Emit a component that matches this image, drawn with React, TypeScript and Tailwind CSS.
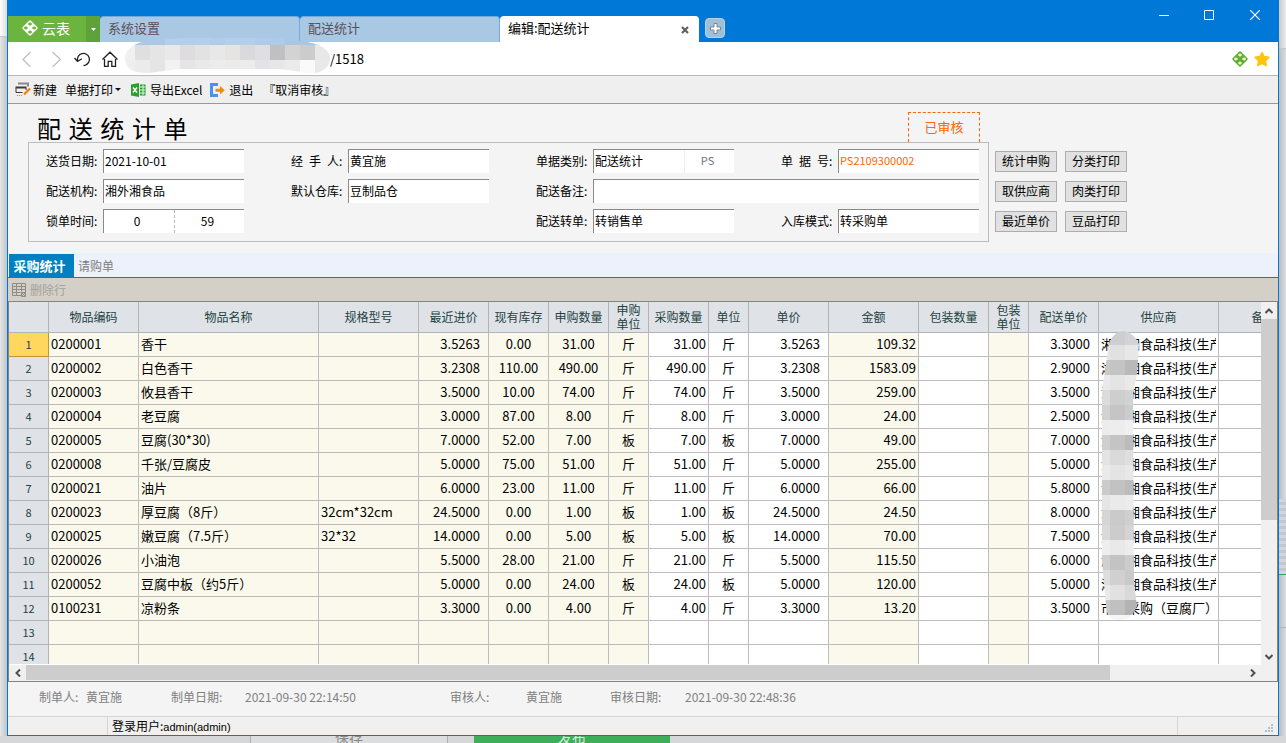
import { ReactNode } from "react"
import { clsx } from "clsx"

type Align = 'left' | 'center' | 'right' | 'rightWide'

interface Column {
  title: ReactNode
  width: number
  align: Align
  locked?: boolean
}

const COLUMNS: Column[] = [
  { title: '物品编码', width: 90, align: 'left', locked: true },
  { title: '物品名称', width: 180, align: 'left', locked: true },
  { title: '规格型号', width: 100, align: 'left', locked: true },
  { title: '最近进价', width: 70, align: 'rightWide', locked: true },
  { title: '现有库存', width: 60, align: 'center', locked: true },
  { title: '申购数量', width: 60, align: 'center', locked: true },
  { title: <>申购<br />单位</>, width: 40, align: 'center', locked: true },
  { title: '采购数量', width: 60, align: 'right' },
  { title: '单位', width: 40, align: 'center' },
  { title: '单价', width: 80, align: 'rightWide' },
  { title: '金额', width: 90, align: 'right', locked: true },
  { title: '包装数量', width: 70, align: 'right' },
  { title: <>包装<br />单位</>, width: 40, align: 'center', locked: true },
  { title: '配送单价', width: 70, align: 'rightWide' },
  { title: '供应商', width: 120, align: 'left' },
  { title: '备注', width: 90, align: 'left' },
]

const ALIGN: Record<Align, string> = {
  left: 'text-left px-0.5',
  center: 'text-center',
  right: 'text-right pr-0.5',
  rightWide: 'text-right pr-2',
}

const SUPPLIER = '湘外湘食品科技(生产)'

// code, name, spec, last price, stock, requested, unit, amount, delivery price
const ITEMS = [
  ['0200001', '香干', '', '3.5263', '0.00', '31.00', '斤', '109.32', '3.3000'],
  ['0200002', '白色香干', '', '3.2308', '110.00', '490.00', '斤', '1583.09', '2.9000'],
  ['0200003', '攸县香干', '', '3.5000', '10.00', '74.00', '斤', '259.00', '3.5000'],
  ['0200004', '老豆腐', '', '3.0000', '87.00', '8.00', '斤', '24.00', '2.5000'],
  ['0200005', '豆腐(30*30)', '', '7.0000', '52.00', '7.00', '板', '49.00', '7.0000'],
  ['0200008', '千张/豆腐皮', '', '5.0000', '75.00', '51.00', '斤', '255.00', '5.0000'],
  ['0200021', '油片', '', '6.0000', '23.00', '11.00', '斤', '66.00', '5.8000'],
  ['0200023', '厚豆腐（8斤）', '32cm*32cm', '24.5000', '0.00', '1.00', '板', '24.50', '8.0000'],
  ['0200025', '嫩豆腐（7.5斤）', '32*32', '14.0000', '0.00', '5.00', '板', '70.00', '7.5000'],
  ['0200026', '小油泡', '', '5.5000', '28.00', '21.00', '斤', '115.50', '6.0000'],
  ['0200052', '豆腐中板（约5斤）', '', '5.0000', '0.00', '24.00', '板', '120.00', '5.0000'],
  ['0100231', '凉粉条', '', '3.3000', '0.00', '4.00', '斤', '13.20', '3.5000'],
]

const ROWS = ITEMS.map(([code, name, spec, price, stock, qty, unit, amount, delivery], i) => [
  code, name, spec, price, stock, qty, unit, qty, unit, price, amount, '', '', delivery,
  i === 11 ? '市场采购（豆腐厂）' : SUPPLIER, '',
])

const EMPTY_ROW = COLUMNS.map(() => '')

function Lattice({ color, holes }: { color: string; holes: string }) {
  return (
    <svg width="16" height="16" viewBox="0 0 16 16" aria-hidden="true">
      <rect x="2.2" y="2.2" width="11.6" height="11.6" rx="1.4" transform="rotate(45 8 8)" fill={color} />
      <g fill={holes}>
        <ellipse cx="8" cy="3.9" rx="1.9" ry="1.5" />
        <ellipse cx="8" cy="12.1" rx="1.9" ry="1.5" />
        <ellipse cx="3.9" cy="8" rx="1.9" ry="1.4" />
        <ellipse cx="12.1" cy="8" rx="1.9" ry="1.4" />
        <path d="M8 6.6L9.400 8 8 9.400 6.600 8z" />
      </g>
      <path d="M5.4 5.4l5.2 5.2M10.6 5.4l-5.2 5.2" stroke={color} strokeWidth="1.2" />
    </svg>
  )
}

function TitleBar() {
  return (
    <header className="flex h-[42px] items-end justify-between bg-[#0078d7]">
      <div className="flex h-[26px] items-stretch text-[13px]">
        <button className="flex w-[78px] items-center gap-1 bg-[#6bb53f] pb-0.5 pl-3.5 text-sm leading-5 text-white">
          <Lattice color="#fff" holes="#6bb53f" />
          云表
        </button>
        <button aria-label="菜单" className="flex w-3.5 items-center justify-center bg-[#5ea23a]">
          <svg width="5" height="3" viewBox="0 0 5 3"><path d="M0 0h5L2.5 3z" fill="#fff" /></svg>
        </button>
        <button className="w-[200px] rounded-t-sm border-t border-r border-[#76a9d8] bg-[#a9c8e4] pb-1 pl-2 text-left leading-5 text-[#5b5157]">
          系统设置
        </button>
        <button className="w-[200px] rounded-t-sm border-t border-r border-[#76a9d8] bg-[#a9c8e4] pb-1 pl-2 text-left leading-5 text-[#5b5157]">
          配送统计
        </button>
        <div className="flex w-[199px] items-start justify-between rounded-t-sm bg-white pt-0.5 pr-2.5 pl-2 leading-5">
          <span>编辑:配送统计</span>
          <button aria-label="关闭标签" className="flex h-6 items-center">
            <svg width="8" height="8" viewBox="0 0 8 8"><path d="M1 1l6 6M7 1L1 7" stroke="#5a6066" strokeWidth="2.2" /></svg>
          </button>
        </div>
        <button aria-label="新标签" className="mt-0.5 ml-1.5 flex h-5 w-5 items-center justify-center rounded-sm border border-[#b9d3e6] bg-[#a0c0da]">
          <svg width="11" height="11" viewBox="0 0 11 11">
            <path d="M4 .5h3V4h3.500v3H7v3.500H4V7H.5V4H4z" fill="#fff" stroke="#7d868d" />
          </svg>
        </button>
      </div>
      <div className="flex h-full items-start text-white">
        <button aria-label="最小化" className="flex h-[30px] w-[45px] items-center justify-center">
          <svg width="10" height="10" viewBox="0 0 10 10"><path d="M0 5.500h10" stroke="currentColor" /></svg>
        </button>
        <button aria-label="最大化" className="flex h-[30px] w-[45px] items-center justify-center">
          <svg width="10" height="10" viewBox="0 0 10 10"><path d="M.5.5h9v9h-9z" fill="none" stroke="currentColor" /></svg>
        </button>
        <button aria-label="关闭" className="flex h-[30px] w-[47px] items-center justify-center">
          <svg width="10" height="10" viewBox="0 0 10 10"><path d="M0 0l10 10M10 0L0 10" stroke="currentColor" strokeWidth="1.200" /></svg>
        </button>
      </div>
    </header>
  )
}

const URL_BLOCKS = [
  ['#b3cdea', '#adc8e6', '#adc8e6', '#b4cfeb', '#b4cfeb', '#b4cfeb', '#b1cce9', '#b4cfeb', '#b4cfeb', '#b0cbe9', '#b0cbe9', '#a9c6e4', '#a9c6e4', '#b3cdea'],
  ['#f0f0f0', '#e0dfe0', '#e6e5e6', '#e9e9ea', '#dfdcdf', '#e3e2e3', '#e8e8e9', '#e5e4e2', '#dadade', '#dfdfe3', '#c0c0c0', '#d3d3d3', '#cccccd', '#e8e8e8'],
  ['#eeeeef', '#ebebeb', '#e5e5e5', '#f2f2f3', '#e6e4e6', '#e9e9e9', '#ececed', '#ebebeb', '#ececec', '#e4e4e7', '#e7e7e9', '#ebebeb', '#fafafa', '#e9e9e9'],
]

function AddressBar() {
  return (
    <div className="relative flex h-[34px] items-center border-b border-[#b9b9b9] bg-white pr-2">
      <svg className="ml-3.5 shrink-0" width="96" height="16" viewBox="0 0 96 16" fill="none">
        <path d="M8.500 1L1 8.500 8.500 16" stroke="#bdbdbd" strokeWidth="1.200" />
        <path d="M30.500 1l8 7.500-8 7.500" stroke="#bdbdbd" strokeWidth="1.200" />
        <path d="M55.500 9.500a6 6 0 1 1 8 4.600l-2 .5M52.500 7l3 3.500 4.300-2.800" stroke="#222" strokeWidth="1.300" />
        <path d="M80.500 8.500L88 1.200l7.500 7.300M82.500 8v7.300h3.700v-5h3.600v5h3.700V8" stroke="#222" strokeWidth="1.300" />
      </svg>
      <input aria-label="地址" defaultValue="/1518" className="h-6 min-w-0 flex-1 pl-[212px] text-[13px] outline-none" />
      <button aria-label="云表" className="mr-1.5"><Lattice color="#5fab37" holes="#eef3b8" /></button>
      <button aria-label="收藏">
        <svg width="16" height="16" viewBox="0 0 16 16">
          <path d="M8 1.500l2 4.100 4.900.7-3.500 3.500.8 4.700L8 12.300l-4.200 2.200.8-4.700L1.100 6.300 6 5.600z" fill="#ffc20e" stroke="#ffc20e" strokeWidth="1.500" strokeLinejoin="round" />
        </svg>
      </button>
      {/* masked host name */}
      <svg className="absolute -top-1 left-[117px]" width="206" height="36" viewBox="0 0 206 36" shapeRendering="crispEdges">
        <clipPath id="host"><path d="M0 20C1 9 12 3 30 2L60 0h90l26 3c18 2 28 8 29 16s-6 17-20 16l-30-4H55l-32 4C8 35 0 31 0 20z" /></clipPath>
        <g clipPath="url(#host)">
          {URL_BLOCKS.map((line, row) =>
            line.map((fill, col) => (
              <rect key={`${row}-${col}`} x={col * 15 - 5} y={[-8, 7, 22][row]} width={15} height={15} fill={fill} />
            ))
          )}
          <rect x="205" y="7" width="5" height="30" fill="#ececec" />
        </g>
      </svg>
    </div>
  )
}

function Toolbar() {
  return (
    <div className="flex h-7 items-center border-b border-[#999] bg-[#efefef] pl-[7px] text-xs leading-5">
      <button className="flex items-center gap-0.5">
        <svg width="16" height="15" viewBox="0 0 16 15" fill="none">
          <path d="M3 1.500h10v3" stroke="#8a8a8a" strokeWidth="2" />
          <path d="M.5 5.500h11" stroke="#3a3a3a" strokeWidth="2" />
          <path d="M1 6v4.500h6.500M11 6v2" stroke="#3a3a3a" />
          <path d="M15 6.500l-6 6" stroke="#f57c00" strokeWidth="2.200" />
          <path d="M2 13.500h6" stroke="#f57c00" strokeDasharray="1 1" />
        </svg>
        新建
      </button>
      <button className="ml-2 flex items-center gap-0.5">
        单据打印
        <svg width="6" height="3" viewBox="0 0 6 3"><path d="M0 0h6L3 3z" fill="#111" /></svg>
      </button>
      <button className="ml-2.5 flex items-center gap-1">
        <svg width="15" height="14" viewBox="0 0 15 14">
          <path d="M0 1.500L8 0v14l-8-1.500z" fill="#27a22d" />
          <path d="M9 1.500h5.500v11H9z" fill="#27a22d" />
          <path d="M9 4h5M9 7h5M9 10h5M12 2v10" stroke="#e9f6e9" />
          <path d="M2 4.500l4 5M6 4.500l-4 5" stroke="#fff" strokeWidth="1.400" />
        </svg>
        导出Excel
      </button>
      <button className="ml-2 flex items-center gap-1">
        <svg width="15" height="14" viewBox="0 0 15 14" fill="none">
          <path d="M8 1.500H1.500v11H8" stroke="#4a90f0" strokeWidth="3" />
          <path d="M5.500 5.800H10V3l4.800 4.200L10 11.500V8.700H5.500z" fill="#f58a07" />
        </svg>
        退出
      </button>
      <button className="ml-2.5">『取消审核』</button>
    </div>
  )
}

interface FieldProps {
  id: string
  label: string
  value?: string
  className?: string
  inputClass?: string
  children?: ReactNode
}

function Field({ id, label, value = '', className, inputClass, children }: FieldProps) {
  return (
    <div className={clsx("flex h-6 items-center", className)}>
      <label htmlFor={id} className="w-[57px] shrink-0 whitespace-nowrap">{label}</label>
      <div className="flex h-6 min-w-0 flex-1 border-t border-l border-[#8a8a8a] bg-white">
        {children ?? <input id={id} defaultValue={value} className={clsx("w-full min-w-0 px-px pb-0.5 outline-none", inputClass)} />}
      </div>
    </div>
  )
}

const ACTIONS = ['统计申购', '分类打印', '取供应商', '肉类打印', '最近单价', '豆品打印']

function OrderForm() {
  return (
    <section className="flex items-end gap-1.5 bg-[#f4f4f4] pb-[11px] pl-5 text-xs">
      <div className="w-[961px]">
        <div className="flex items-end justify-between pr-[9px] pl-[9px]">
          <h1 className="font-['DejaVu_Sans','Noto_Sans_CJK_SC',sans-serif] text-2xl leading-6">
            配 送 统 计 单
          </h1>
          <div className="mt-2 flex h-[30px] w-[72px] items-center justify-center border border-b-0 border-dashed border-[#ff6600] pb-0.5 text-[13px] text-[#ff6600]">
            已审核
          </div>
        </div>
        <div className="grid grid-cols-[repeat(4,198px)] gap-x-[47px] gap-y-1.5 border border-[#bdbdbd] pt-1.5 pb-2 pl-[17px]">
          <Field id="date" label="送货日期:" value="2021-10-01" />
          <Field id="handler" label={"经\u2002手\u2002人:"} value="黄宜施" />
          <Field id="kind" label="单据类别:">
            <input id="kind" defaultValue="配送统计" className="w-[90px] px-px pb-0.5 outline-none" />
            <input aria-label="类别代码" defaultValue="PS" className="w-[50px] border-l border-[#eee] pr-1 pb-0.5 text-center text-[11px] text-gray-500 outline-none" />
          </Field>
          <Field id="number" label={"单\u2002据\u2002号:"} value="PS2109300002" inputClass="text-[11px] text-[#ff6600]" />
          <Field id="org" label="配送机构:" value="湘外湘食品" />
          <Field id="store" label="默认仓库:" value="豆制品仓" />
          <Field id="remark" label="配送备注:" className="col-span-2" />
          <Field id="lock" label="锁单时间:">
            <input id="lock" defaultValue="0" className="w-[70px] pr-1 pb-0.5 text-center outline-none" />
            <input aria-label="锁单分钟" defaultValue="59" className="w-[70px] border-l border-dashed border-[#bbb] pr-1 pb-0.5 text-center outline-none" />
          </Field>
          <Field id="transfer" label="配送转单:" value="转销售单" className="col-start-3" />
          <Field id="mode" label="入库模式:" value="转采购单" />
        </div>
      </div>
      <div className="grid grid-cols-[62px_62px] gap-x-2 gap-y-[9px] pb-2.5">
        {ACTIONS.map((name) => (
          <button key={name} className="flex h-[21px] items-center justify-center border border-[#adadad] bg-[#e1e1e1] pb-0.5 leading-4">
            {name}
          </button>
        ))}
      </div>
    </section>
  )
}

const SUPPLIER_BLOCKS = [
  ['#cfcfd2', '#cdced1', '#d2d3d6'],
  ['#e6e6e6', '#e1e1e1', '#e7e7e7'],
  ['#c9c9c9', '#c4c4c4', '#b9b9b9'],
  ['#e9e9e9', '#e4e4e4', '#e9e9e9'],
  ['#dcdcdc', '#cecece', '#d2d2d2'],
  ['#d2d2d2', '#c5c5c5', '#cccccc'],
  ['#ececec', '#ededed', '#f0f0f0'],
  ['#cfcfcf', '#c4c4c4', '#bbbbbb'],
  ['#e3e3e3', '#dadada', '#dfdfdf'],
  ['#eaeaea', '#e4e4e4', '#e8e8e8'],
  ['#cbcbcb', '#c2c2c2', '#bcbcbc'],
  ['#e5e5e5', '#eaeaea', '#ececec'],
  ['#d5d5d5', '#cacaca', '#cfcfcf'],
  ['#d9d9d9', '#cccccc', '#d4d4d4'],
  ['#eeeeee', '#e9e9e9', '#ededed'],
  ['#cfcfcf', '#c3c3c3', '#cccccc'],
  ['#dddddd', '#d0d0d0', '#c9c9c9'],
  ['#e9e9e9', '#e1e1e1', '#d9d9d9'],
  ['#c9c9c9', '#c0c0c0', '#b3b3b3'],
  ['#f5f5f5', '#f5f5f5', '#f5f5f5'],
]

function Chevron({ d }: { d: string }) {
  return (
    <svg width="8" height="8" viewBox="0 0 8 8" fill="none"><path d={d} stroke="#505050" strokeWidth="2" /></svg>
  )
}

function ItemGrid() {
  return (
    <div className="flex min-h-0 flex-1 flex-col border border-[#858585] bg-[#f0f0f0]">
      <div className="flex min-h-0 flex-1">
        <div className="relative min-w-0 flex-1 overflow-hidden border-b border-white bg-white">
          <table className="w-[1300px] table-fixed border-separate border-spacing-0 text-[13px] leading-5">
            <colgroup>
              <col style={{ width: 40 }} />
              {COLUMNS.map((c, i) => <col key={i} style={{ width: c.width }} />)}
            </colgroup>
            <thead>
              <tr className="h-[31px] bg-[#dfe3e8] text-xs leading-[14px] text-[#24423f]">
                <th aria-label="行号" className="border-r border-b border-[#b0b4ba]" />
                {COLUMNS.map((c, i) => (
                  <th key={i} className="border-r border-b border-[#b0b4ba] p-0 font-normal">{c.title}</th>
                ))}
              </tr>
            </thead>
            <tbody>
              {[...ROWS, EMPTY_ROW, EMPTY_ROW].map((row, r) => (
                <tr key={r} className="h-6">
                  <th
                    className={clsx(
                      "border-r border-b p-0 pb-0.5 text-[11px] font-normal text-[#24423f]",
                      r === 0 ? "border-[#c8922e] bg-[#ffd75e]" : "border-[#b0b4ba] bg-[#dfe3e8]"
                    )}
                  >
                    {r + 1}
                  </th>
                  {row.map((value, i) => (
                    <td
                      key={i}
                      className={clsx(
                        "border-r border-b border-[#bdbdbd] pt-0 pb-0.5",
                        ALIGN[COLUMNS[i].align],
                        COLUMNS[i].locked ? "bg-[#fbf9ec]" : "bg-white"
                      )}
                    >
                      <div className="overflow-hidden whitespace-nowrap">{value}</div>
                    </td>
                  ))}
                </tr>
              ))}
            </tbody>
          </table>
          {/* masked supplier names */}
          <svg className="absolute top-[29px] left-[1092px]" width="40" height="290" viewBox="0 0 40 290" shapeRendering="crispEdges">
            <clipPath id="supplier"><path d="M8 12C12 4 17 0 22 0s12 4 16 13l-2 30-4 20 1 190 3 22c-4 10-10 14-18 14S6 286 5 275L1 230V60z" /></clipPath>
            <g clipPath="url(#supplier)">
              {SUPPLIER_BLOCKS.map((line, row) =>
                line.map((fill, col) => (
                  <rect key={`${row}-${col}`} x={[0, 9, 24][col]} y={row * 15 - 1} width={16} height={15} fill={fill} />
                ))
              )}
            </g>
          </svg>
        </div>
        <div className="flex w-4 flex-col">
          <button aria-label="向上滚动" className="flex h-[17px] items-center justify-center"><Chevron d="M0.500 6L4 2.500 7.500 6" /></button>
          <div className="flex-1"><div className="h-[61%] bg-[#cdcdcd]" /></div>
          <button aria-label="向下滚动" className="flex h-[17px] items-center justify-center"><Chevron d="M0.500 2L4 5.500 7.500 2" /></button>
        </div>
      </div>
      <div className="flex h-4 items-stretch pr-4">
        <button aria-label="向左滚动" className="flex w-[17px] items-center justify-center"><Chevron d="M6 0.500L2.500 4 6 7.500" /></button>
        <div className="flex-1"><div className="h-[15px] w-[89%] bg-[#cdcdcd]" /></div>
        <button aria-label="向右滚动" className="flex w-[17px] items-center justify-center"><Chevron d="M2 0.500L5.500 4 2 7.500" /></button>
      </div>
    </div>
  )
}

function Footer() {
  return (
    <footer className="text-xs">
      <div className="flex h-[34px] items-center bg-[#f4f4f4] pb-1 pl-[31px] text-[#808080]">
        <span className="w-[47px]">制单人:</span>
        <span className="w-[85px]">黄宜施</span>
        <span className="w-[74px]">制单日期:</span>
        <span className="w-[205px]">2021-09-30 22:14:50</span>
        <span className="w-[76px]">审核人:</span>
        <span className="w-[84px]">黄宜施</span>
        <span className="w-[75px]">审核日期:</span>
        <span>2021-09-30 22:48:36</span>
      </div>
      <div className="flex h-[19px] items-center border-t border-[#d5d5d5] bg-[#f0f0f0]">
        <div className="h-full w-[100px] border-r border-[#d5d5d5]" />
        <div className="flex-1 pl-1 leading-4">
          登录用户:<span className="font-['Liberation_Sans',sans-serif] text-[11px]">admin(admin)</span>
        </div>
        <div className="flex h-full w-[101px] items-end justify-end border-l border-[#d5d5d5] pr-1 pb-0.5">
          <svg width="9" height="9" viewBox="0 0 9 9" fill="#bbb">
            <path d="M6 0h2v2H6zM3 3h2v2H3zM6 3h2v2H6zM0 6h2v2H0zM3 6h2v2H3zM6 6h2v2H6z" />
          </svg>
        </div>
      </div>
    </footer>
  )
}

export default function App() {
  return (
    <div className="flex h-screen flex-col overflow-hidden bg-[#d6d7d9] font-['Noto_Sans_CJK_SC',sans-serif] text-black">
      <div className="flex min-h-0 flex-1">
        <div className="w-[7px] bg-linear-to-r from-[#e4e5e7] to-[#c3c4c6]">
          <div className="h-[37px] border-b border-[#c6c6c6] bg-linear-to-r from-white to-[#dcdcdc]" />
        </div>
        <main className="flex min-w-0 flex-1 flex-col border border-t-0 border-[#0078d7] bg-[#f4f4f4]">
          <TitleBar />
          <AddressBar />
          <Toolbar />
          <OrderForm />
          <nav className="flex h-[25px] items-end border-b border-[#0080c0] bg-[#edf1fb] pl-px">
            <button className="h-[23px] w-[65px] bg-[#0080c0] pr-1 text-[13px] leading-5 font-bold text-white">采购统计</button>
            <button className="h-[23px] px-1 text-xs text-[#808080]">请购单</button>
          </nav>
          <div className="flex h-[23px] items-center bg-[#d4d0c8] pl-1">
            <button disabled className="flex items-center gap-[3px] text-xs leading-5 text-[#a5a29c]">
              <svg width="15" height="14" viewBox="0 0 15 14" fill="none" stroke="#8f8c86">
                <path d="M.5.5h13v12H.5zM.5 3.500h13M.5 6.500h13M.5 9.500h8M4.500.5v12M9.500.5v8" />
                <path d="M9.500 9.500h4v4h-4zM10 10l3 3M13 10l-3 3" fill="#d4d0c8" />
              </svg>
              删除行
            </button>
          </div>
          <ItemGrid />
          <Footer />
        </main>
        <div className="flex w-[7px] flex-col bg-linear-to-r from-[#bcbdbf] to-[#dcdddf]">
          <div className="h-[49px] border-b border-[#c4c4c4] bg-linear-to-r from-[#c9c9c9] to-[#ececec]" />
          <div className="flex-1" />
          <div className="h-[76px] border-b border-[#3c9d63] bg-[repeating-linear-gradient(#d4d4dc_0_3px,#c6c6c8_3px_6px)]" />
          <div className="h-[53px] border-b border-[#b4b4b6]" />
          <div className="h-[108px]" />
        </div>
      </div>
      {/* page behind the window */}
      <div className="flex h-[7px] overflow-hidden pl-[250px] text-center text-sm leading-[2px]">
        <div className="w-[198px] border-x border-[#b0b0b2] bg-[#dcdddf] text-[#8a8a8a]">保存</div>
        <div className="ml-[26px] w-[196px] bg-[#3fae5a] text-[#cfeed7]">发布</div>
      </div>
    </div>
  )
}
